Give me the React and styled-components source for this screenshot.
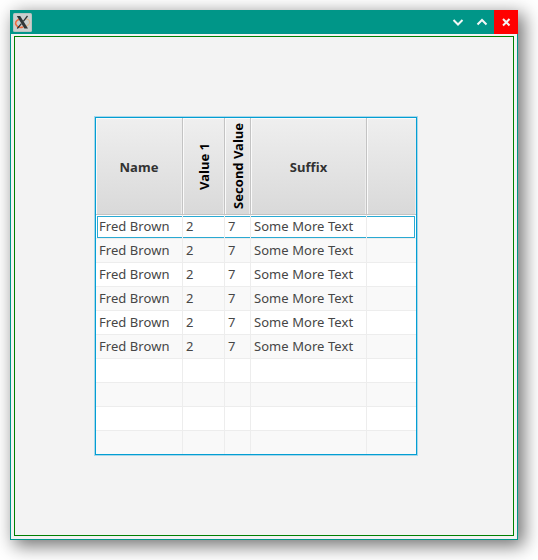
import React from "react";
import styled, { createGlobalStyle, css } from "styled-components";

const GlobalStyle = createGlobalStyle`
  * { box-sizing: border-box; }
  body { margin: 0; background: #fff; overflow: hidden; font-family: "Noto Sans", sans-serif; }
`;

const Desktop = styled.main`
  width: 538px;
  height: 560px;
  padding: 10px;
  background: #fff;
`;

const Window = styled.section`
  width: 508px;
  height: 530px;
  display: flex;
  flex-direction: column;
  background: #f3f3f3;
  border: 1px solid #009688;
  border-top: 0;
  box-shadow: 5px 5px 17px 1px rgba(0, 0, 0, 0.55);
`;

const TitleBar = styled.header`
  height: 24px;
  margin: 0 -1px;
  flex: none;
  display: flex;
  align-items: center;
  background: #009688;
  padding-left: 3px;
`;

const Spacer = styled.div`
  flex: 1;
`;

const WindowButton = styled.button`
  width: 24px;
  height: 24px;
  padding: 0;
  border: 0;
  display: block;
  background: ${(p) => (p.$close ? "#ff0000" : "transparent")};
`;

const Glyph = styled.svg`
  display: block;
  fill: none;
  stroke: #f3f7f6;
  stroke-width: 2;
`;

const Content = styled.div`
  margin: 2px 3px 3px;
  flex: 1;
  border: 1px solid #008000;
  padding: 80px;
`;

const TableFrame = styled.div`
  width: 322px;
  height: 338px;
  border: 1px solid #039ed3;
  box-shadow: 0 0 0 1px #a8d8ea;
  overflow: hidden;
  background: #fff;
`;

const columns = css`
  display: grid;
  grid-template-columns: 87px 42px 26px 116px 49px;
`;

const HeaderRow = styled.div`
  ${columns}
  height: 97px;
  background: linear-gradient(#efefef, #d9d9d9);
  border-bottom: 1px solid #c3c3c3;
`;

const HeaderCell = styled.div`
  display: flex;
  align-items: center;
  justify-content: center;
  border-right: ${(p) => (p.$last ? "0" : "1px solid #c3c3c3")};
  box-shadow: inset 1px 1px 0 #fafafa, inset -1px 0 0 #ececec;
  font-size: 13px;
  font-weight: 700;
  letter-spacing: ${(p) => (p.$vertical ? "0" : "0.06px")};
  color: ${(p) => (p.$vertical ? "#000" : "#323232")};
  padding-top: ${(p) => (p.$vertical ? "0" : "2px")};
`;

const VerticalLabel = styled.span`
  writing-mode: vertical-rl;
  transform: rotate(180deg);
  white-space: nowrap;
  line-height: 18px;
`;

const Row = styled.div`
  ${columns}
  position: relative;
  height: 24px;
  background: ${(p) => (p.$odd ? "#f9f9f9" : "#fff")};
`;

const Cell = styled.div`
  position: relative;
  border-right: ${(p) => (p.$last ? "0" : "1px solid #ededed")};
  border-bottom: 1px solid #ededed;
  padding-left: 3px;
  font-size: 13px;
  line-height: 23px;
  letter-spacing: 0.06px;
  color: #464646;
  white-space: nowrap;
`;

const FocusRing = styled.div`
  position: absolute;
  inset: 1px;
  border: 1px solid #2aa9d2;
  pointer-events: none;
`;

const headers = [
  { label: "Name" },
  { label: "Value 1", vertical: true },
  { label: "Second Value", vertical: true },
  { label: "Suffix" },
  { label: "" },
];

const record = ["Fred Brown", "2", "7", "Some More Text", ""];
const empty = ["", "", "", "", ""];
const rows = [...Array(6).fill(record), ...Array(4).fill(empty)];

function AppIcon() {
  return (
    <svg width="19" height="19" viewBox="0 0 19 19">
      <rect width="19" height="19" rx="1.5" fill="#b7c3c1" />
      <rect x="1" y="1" width="17" height="17" rx="1" fill="#cbcfce" />
      <path d="M7 6C3 7 1.5 10 3.5 12.5C5 14.5 8 14.7 10 14" fill="none" stroke="#f06a3c" strokeWidth="1.5" />
      <path d="M10 14c5-.6 7.500-3.300 6.500-6C16 6.500 14.500 6 13 6" fill="none" stroke="#e5b78f" strokeWidth="1.2" />
      <path d="M3.800 3h3.400l7.800 12.500h-3.600z" fill="#303538" />
      <path d="M14.500 3L10.300 8.300M8.400 10.700L4.300 15.500" stroke="#303538" strokeWidth="1.300" />
    </svg>
  );
}

export default function App() {
  return (
    <>
      <GlobalStyle />
      <Desktop>
        <Window>
          <TitleBar>
            <AppIcon />
            <Spacer />
            <WindowButton aria-label="Minimize">
              <Glyph width="24" height="24"><path d="M7.500 10l4.500 4.500 4.500-4.500" /></Glyph>
            </WindowButton>
            <WindowButton aria-label="Maximize">
              <Glyph width="24" height="24"><path d="M7.500 14.500l4.500-4.500 4.500 4.500" /></Glyph>
            </WindowButton>
            <WindowButton $close aria-label="Close">
              <Glyph width="24" height="24"><path d="M9 9l6.500 6.500M15.500 9L9 15.500" /></Glyph>
            </WindowButton>
          </TitleBar>
          <Content>
            <TableFrame>
              <HeaderRow>
                {headers.map((h, i) => (
                  <HeaderCell key={i} $vertical={h.vertical} $last={i === 4}>
                    {h.vertical ? <VerticalLabel>{h.label}</VerticalLabel> : h.label}
                  </HeaderCell>
                ))}
              </HeaderRow>
              {rows.map((cells, r) => (
                <Row key={r} $odd={r % 2 === 1}>
                  {r === 0 && <FocusRing />}
                  {cells.map((c, i) => (
                    <Cell key={i} $last={i === 4}>{c}</Cell>
                  ))}
                </Row>
              ))}
            </TableFrame>
          </Content>
        </Window>
      </Desktop>
    </>
  );
}
